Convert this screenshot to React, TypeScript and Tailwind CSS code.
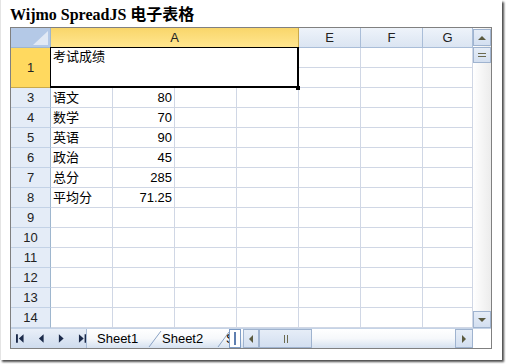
import React from "react";

const cellFont = "font-['Liberation_Sans','Noto_Sans_CJK_SC',sans-serif]";

const data: [string, string][] = [
  ["语文", "80"],
  ["数学", "70"],
  ["英语", "90"],
  ["政治", "45"],
  ["总分", "285"],
  ["平均分", "71.25"],
];

function Tri({ dir }: { dir: "up" | "down" | "left" | "right" }) {
  const pts =
    dir === "up"
      ? "0,5 4,1 8,5"
      : dir === "down"
      ? "0,1 8,1 4,5"
      : dir === "left"
      ? "5,0 5,8 1,4"
      : "1,0 1,8 5,4";
  const w = dir === "up" || dir === "down" ? 8 : 6;
  const h = dir === "up" || dir === "down" ? 6 : 8;
  return (
    <svg width={w} height={h} viewBox={`0 0 ${w} ${h}`}>
      <polygon points={pts} fill="#5b5a3f" />
    </svg>
  );
}

function NavArrow({ dir, bar }: { dir: "left" | "right"; bar?: boolean }) {
  return (
    <svg width="9" height="9" viewBox="0 0 9 9">
      {dir === "left" ? (
        <>
          {bar && <rect x="0" y="0" width="2" height="9" fill="#1b2a4a" />}
          <polygon points={bar ? "8,0 8,9 3,4.5" : "7,0 7,9 2,4.5"} fill="#1b2a4a" />
        </>
      ) : (
        <>
          <polygon points={bar ? "1,0 1,9 6,4.5" : "2,0 2,9 7,4.5"} fill="#1b2a4a" />
          {bar && <rect x="7" y="0" width="2" height="9" fill="#1b2a4a" />}
        </>
      )}
    </svg>
  );
}

export default function App() {
  const hdr =
    "bg-gradient-to-b from-[#eef3fa] to-[#dbe5f2] border-r border-b border-[#a9bdd8] flex items-center justify-center text-[13px] text-[#222]";
  const rowHdr =
    "bg-[#e4ecf7] border-r border-b border-r-[#9eb6ce] border-b-[#c3d2e6] flex items-center justify-center text-[13px] text-[#222]";
  const cell = "border-r border-b border-[#d0d7e5]";
  return (
    <div className="w-[506px] h-[364px] bg-white">
      <div className="w-[502px] h-[360px] bg-white border-l border-[#e4e4e4] shadow-[2px_2px_2px_rgba(0,0,0,0.7)] pl-[9px]">
        <div className="h-[27px] pt-[5px] leading-[20px] text-[16px] font-bold text-black font-['Liberation_Serif','Noto_Sans_CJK_SC',serif]">
          Wijmo SpreadJS 电子表格
        </div>
        <div className={`w-[482px] h-[322px] border border-[#808080] flex flex-col ${cellFont}`}>
          <div className="flex h-[300px]">
            <div className="relative w-[462px] h-[300px] overflow-hidden">
              <div className="grid grid-cols-[40px_62px_62px_62px_62px_62px_62px_50px] grid-rows-[repeat(15,20px)]">
                <div className="relative bg-[#b4c9e7] border-r border-b border-[#9eb6ce]">
                  <svg className="absolute right-[2px] bottom-[2px]" width="15" height="14" viewBox="0 0 15 14">
                    <polygon points="15,0 15,14 0,14" fill="#e1e9f5" />
                  </svg>
                </div>
                <div className="col-span-4 bg-gradient-to-b from-[#f9d66a] to-[#ffe68f] border-r border-b border-r-[#c9a94a] border-b-[#9eb6ce] flex items-center justify-center text-[13px] text-[#222]">
                  A
                </div>
                <div className={hdr}>E</div>
                <div className={hdr}>F</div>
                <div className={hdr}>G</div>
                <div className="row-span-2 bg-[#ffd95f] border-r border-b border-r-[#9eb6ce] border-b-[#c9a94a] flex items-center justify-center text-[13px] text-[#222]">
                  1
                </div>
                <div className="col-span-4 row-span-2 bg-white px-[2px] pt-[1px] text-[13px] leading-[16px] text-black">
                  考试成绩
                </div>
                <div className={cell}></div>
                <div className={cell}></div>
                <div className={cell}></div>
                <div className={cell}></div>
                <div className={cell}></div>
                <div className={cell}></div>
                {Array.from({ length: 12 }, (_, i) => {
                  const n = i + 3;
                  const d = data[i];
                  return (
                    <React.Fragment key={n}>
                      <div className={rowHdr}>{n}</div>
                      <div className={`${cell} flex items-center px-[2px] text-[13px] text-black`}>{d ? d[0] : ""}</div>
                      <div className={`${cell} flex items-center justify-end px-[2px] text-[13px] text-black`}>{d ? d[1] : ""}</div>
                      <div className={cell}></div>
                      <div className={cell}></div>
                      <div className={cell}></div>
                      <div className={cell}></div>
                      <div className={cell}></div>
                    </React.Fragment>
                  );
                })}
              </div>
              <div className="absolute left-[39px] top-[19px] w-[249px] h-[41px] border-l border-t border-r-2 border-b-2 border-black pointer-events-none" />
              <div className="absolute left-[285px] top-[58px] w-[4px] h-[4px] bg-black" />
            </div>
            <div className="w-[18px] h-[300px] bg-gradient-to-r from-[#ffffff] to-[#ececec] flex flex-col">
              <div className="mt-[1px] h-[17px] border border-[#9fb3cf] bg-gradient-to-b from-[#e6edf7] to-[#d3dff0] flex items-center justify-center">
                <Tri dir="up" />
              </div>
              <div className="mt-[1px] h-[16px] border border-[#9fb3cf] bg-gradient-to-b from-[#e6edf7] to-[#d3dff0] flex flex-col items-center justify-center gap-[2px]">
                <div className="w-[8px] h-[1px] bg-[#6b6a4f]" />
                <div className="w-[8px] h-[1px] bg-[#6b6a4f]" />
              </div>
              <div className="flex-1" />
              <div className="h-[17px] border border-[#9fb3cf] bg-gradient-to-b from-[#e6edf7] to-[#d3dff0] flex items-center justify-center">
                <Tri dir="down" />
              </div>
            </div>
          </div>
          <div className="h-[20px] flex border-t border-[#c5d3e6] bg-gradient-to-b from-[#ffffff] via-[#f6f8fb] to-[#d5e1f0]">
            <div className="w-[76px] h-full border-r border-[#a9bdd8] bg-gradient-to-b from-[#e9eff8] to-[#cfdcee] flex items-center pl-[5px] gap-[12px]">
              <NavArrow dir="left" bar />
              <NavArrow dir="left" />
              <NavArrow dir="right" />
              <NavArrow dir="right" bar />
            </div>
            <div className="relative w-[142px] h-full overflow-hidden text-[13px] text-black">
              <svg className="absolute left-0 top-0" width="142" height="19" viewBox="0 0 142 19">
                <line x1="62" y1="18" x2="74" y2="2" stroke="#8aa2c4" strokeWidth="1" />
                <line x1="131" y1="18" x2="142" y2="3" stroke="#8aa2c4" strokeWidth="1" />
              </svg>
              <span className="absolute left-[10px] top-[2px] leading-[16px]">Sheet1</span>
              <span className="absolute left-[75px] top-[2px] leading-[16px]">Sheet2</span>
              <span className="absolute left-[139px] top-[2px] leading-[16px]">Sheet3</span>
            </div>
            <div className="w-[12px] h-full border border-[#7f9dc6] bg-white flex items-center justify-center">
              <div className="w-[2px] h-[13px] bg-[#5f7fb0]" />
            </div>
            <div className="w-[2px]" />
            <div className="w-[16px] h-full border border-[#9fb3cf] bg-gradient-to-b from-[#e6edf7] to-[#d3dff0] flex items-center justify-center">
              <Tri dir="left" />
            </div>
            <div className="w-[53px] h-full border border-[#9fb3cf] bg-gradient-to-b from-[#e6edf7] to-[#d3dff0] flex items-center justify-center gap-[2px]">
              <div className="w-[1px] h-[8px] bg-[#6b6a4f]" />
              <div className="w-[1px] h-[8px] bg-[#6b6a4f]" />
            </div>
            <div className="flex-1" />
            <div className="w-[18px] h-full border border-[#9fb3cf] bg-gradient-to-b from-[#e6edf7] to-[#d3dff0] flex items-center justify-center">
              <Tri dir="right" />
            </div>
            <div className="w-[18px] h-full bg-white" />
          </div>
        </div>
      </div>
    </div>
  );
}
